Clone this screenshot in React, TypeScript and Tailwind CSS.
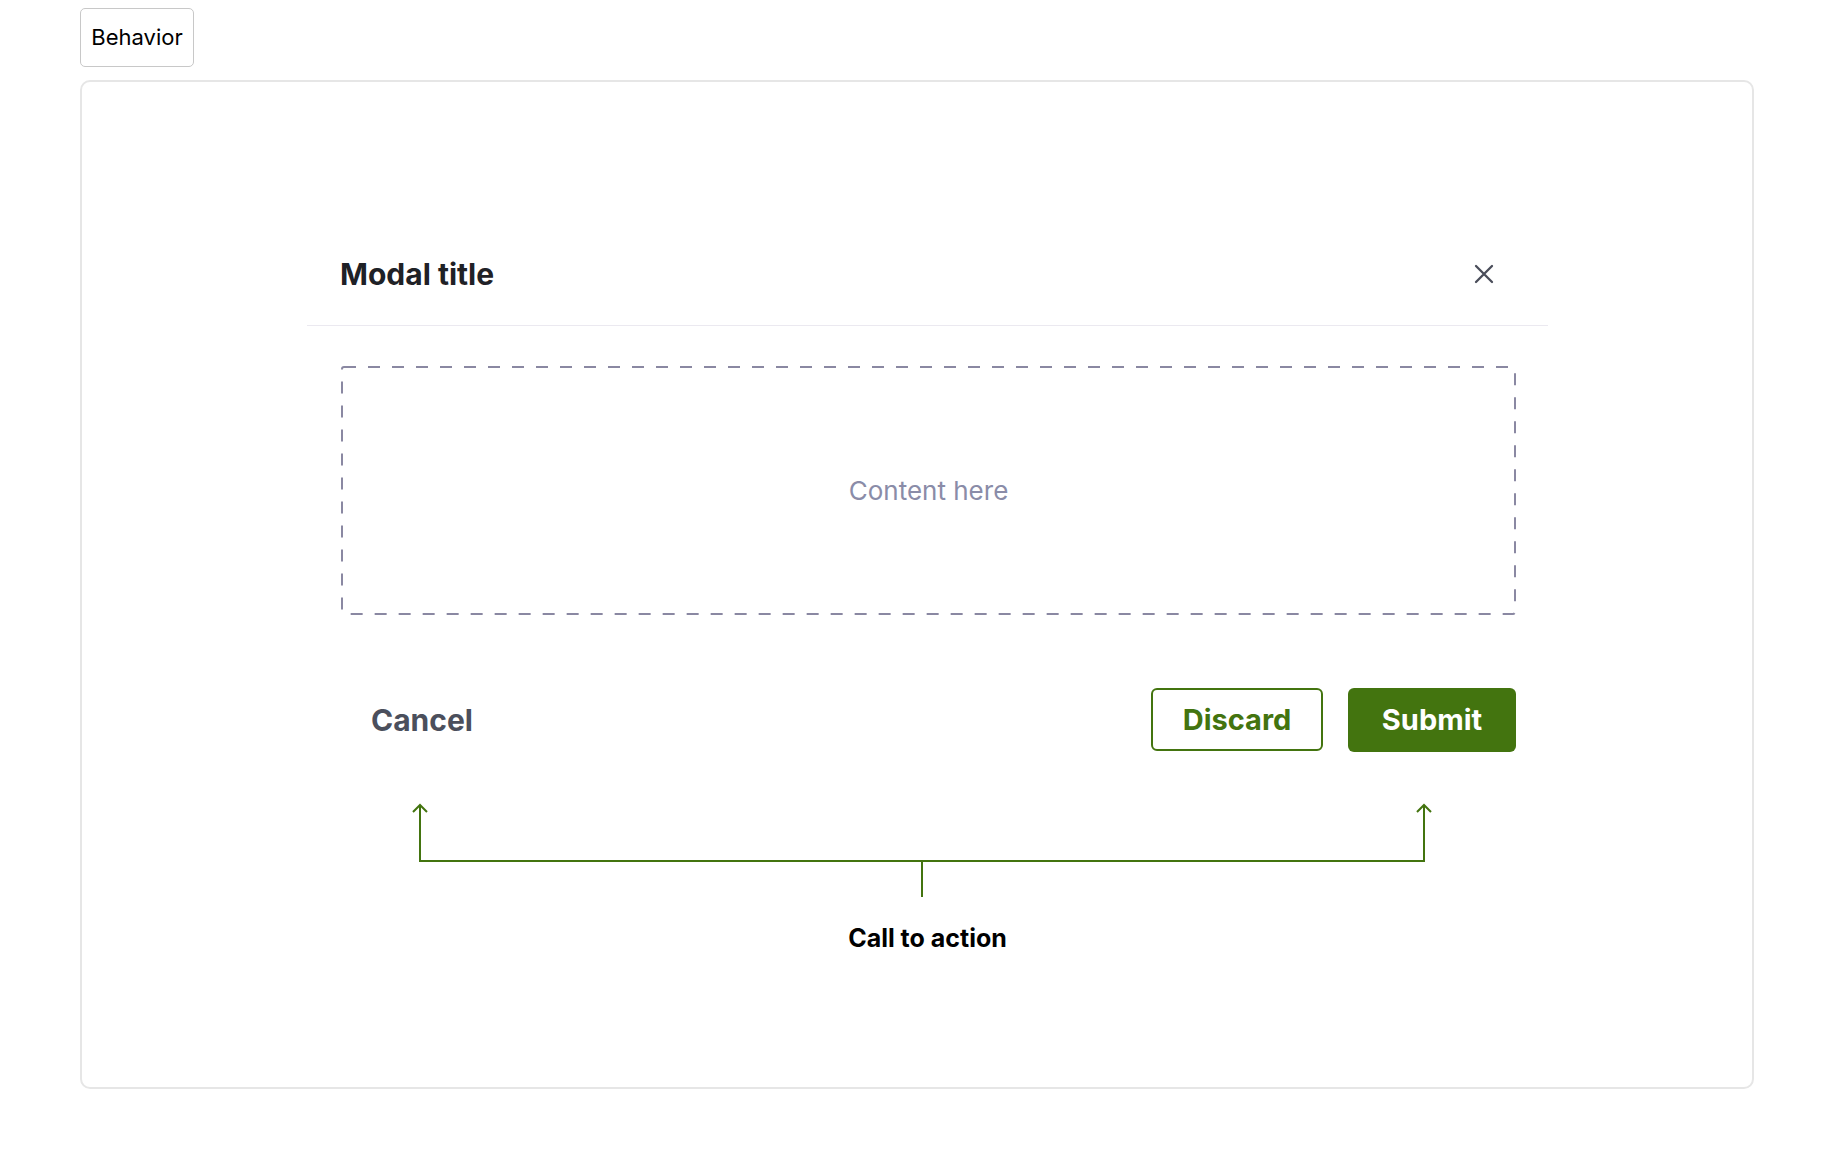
import React from 'react';

const GREEN = '#43740f';

const CloseIcon: React.FC = () => (
  <svg width="20" height="20" viewBox="0 0 20 20" fill="none" stroke="#4a4d5a" strokeWidth="2.3" strokeLinecap="round">
    <path d="M2 2 L18 18 M18 2 L2 18" />
  </svg>
);

const DashedBox: React.FC = () => (
  <div className="relative ml-[34px] mr-[32px] h-[249px] flex items-center justify-center">
    <svg className="absolute inset-0" width="1175" height="249" fill="none">
      <rect x="1" y="1" width="1173" height="247" rx="2" stroke="#8a88a2" strokeWidth="2" strokeDasharray="12 12" />
    </svg>
    <span className="text-[26px] text-[#8a8ca8] font-['Inter',sans-serif]">Content here</span>
  </div>
);

const Annotation: React.FC = () => (
  <svg width="1241" height="100" fill="none" stroke={GREEN} strokeWidth="2" className="block">
    {/* bracket from Cancel and Submit down to the label */}
    <path d="M113 5 V61 H1117 V5" />
    <path d="M106 12 L113 5 L120 12" />
    <path d="M1110 12 L1117 5 L1124 12" />
    <path d="M615 61 V97" />
  </svg>
);

const Modal: React.FC = () => (
  <div className="w-[1241px] font-['Inter',sans-serif]">
    <div className="h-[102px] flex items-center justify-between pl-[33px] pr-[54px]">
      <h2 className="text-[30px] font-bold text-[#1f2126] leading-[36px]">Modal title</h2>
      <CloseIcon />
    </div>
    <div className="h-px bg-[#ebe9f0]" />
    <div className="pt-[40px]">
      <DashedBox />
    </div>
    <div className="mt-[73px] ml-[34px] mr-[32px] flex items-center justify-between">
      <button className="h-[64px] px-[30px] text-[30px] font-bold text-[#4b4f5c]">Cancel</button>
      <div className="flex gap-[25px]">
        <button className="w-[172px] h-[63px] rounded-[6px] border-2 border-[#43740f] text-[29px] font-bold text-[#43740f]">
          Discard
        </button>
        <button className="w-[168px] h-[64px] rounded-[6px] bg-[#43740f] text-[29px] font-bold text-white">
          Submit
        </button>
      </div>
    </div>
    <div className="mt-[48px]">
      <Annotation />
    </div>
    <p className="mt-[23px] text-center text-[25px] leading-[30px] font-bold text-black">Call to action</p>
  </div>
);

export default function App() {
  return (
    <div className="min-h-[1170px] bg-white">
      <div className="pl-[80px] pt-[8px]">
        <button className="w-[114px] h-[59px] rounded-[5px] border-[1.5px] border-[#c8c8c8] text-[22px] text-black font-['Inter',sans-serif]">
          Behavior
        </button>
      </div>
      <div className="ml-[80px] mt-[13px] w-[1674px] h-[1009px] rounded-[10px] border-2 border-[#e6e6e6] pt-[141px] pl-[225px]">
        <Modal />
      </div>
    </div>
  );
}
